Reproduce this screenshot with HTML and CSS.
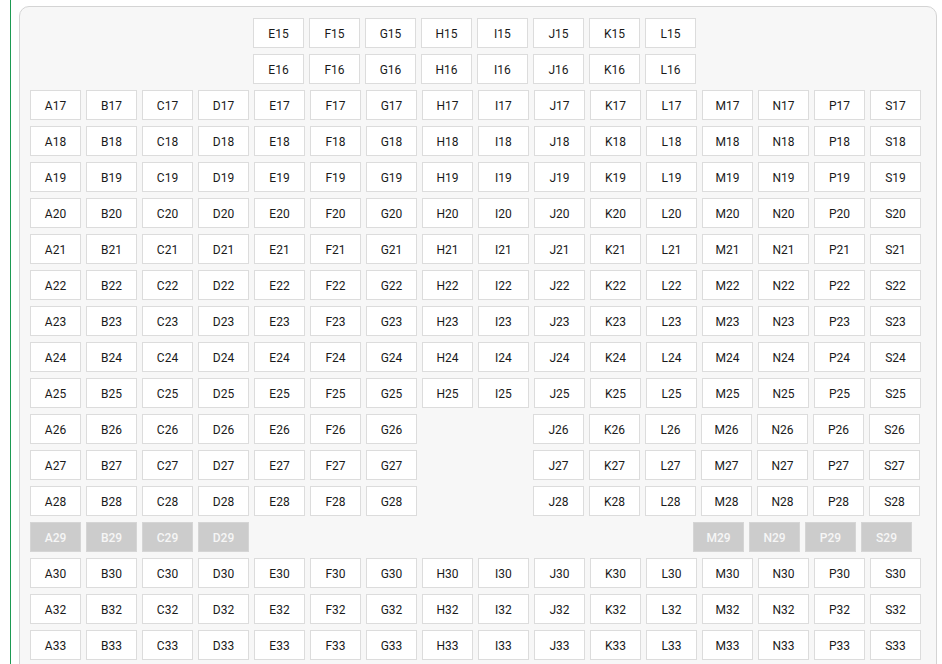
FILE: index.html
```html
<!DOCTYPE html>
<html>
<head>
<meta charset="utf-8">
<link rel="stylesheet" href="styles.css">
</head>
<body>
<div class="frame">
<div class="panel">
<div class="rows">
<div class="row"><span class="sp sp-top"></span><span class="seat">E15</span><span class="seat">F15</span><span class="seat">G15</span><span class="seat">H15</span><span class="seat">I15</span><span class="seat">J15</span><span class="seat">K15</span><span class="seat">L15</span></div>
<div class="row"><span class="sp sp-top"></span><span class="seat">E16</span><span class="seat">F16</span><span class="seat">G16</span><span class="seat">H16</span><span class="seat">I16</span><span class="seat">J16</span><span class="seat">K16</span><span class="seat">L16</span></div>
<div class="row"><span class="seat">A17</span><span class="seat">B17</span><span class="seat">C17</span><span class="seat">D17</span><span class="seat">E17</span><span class="seat">F17</span><span class="seat">G17</span><span class="seat">H17</span><span class="seat">I17</span><span class="seat">J17</span><span class="seat">K17</span><span class="seat">L17</span><span class="seat">M17</span><span class="seat">N17</span><span class="seat">P17</span><span class="seat">S17</span></div>
<div class="row"><span class="seat">A18</span><span class="seat">B18</span><span class="seat">C18</span><span class="seat">D18</span><span class="seat">E18</span><span class="seat">F18</span><span class="seat">G18</span><span class="seat">H18</span><span class="seat">I18</span><span class="seat">J18</span><span class="seat">K18</span><span class="seat">L18</span><span class="seat">M18</span><span class="seat">N18</span><span class="seat">P18</span><span class="seat">S18</span></div>
<div class="row"><span class="seat">A19</span><span class="seat">B19</span><span class="seat">C19</span><span class="seat">D19</span><span class="seat">E19</span><span class="seat">F19</span><span class="seat">G19</span><span class="seat">H19</span><span class="seat">I19</span><span class="seat">J19</span><span class="seat">K19</span><span class="seat">L19</span><span class="seat">M19</span><span class="seat">N19</span><span class="seat">P19</span><span class="seat">S19</span></div>
<div class="row"><span class="seat">A20</span><span class="seat">B20</span><span class="seat">C20</span><span class="seat">D20</span><span class="seat">E20</span><span class="seat">F20</span><span class="seat">G20</span><span class="seat">H20</span><span class="seat">I20</span><span class="seat">J20</span><span class="seat">K20</span><span class="seat">L20</span><span class="seat">M20</span><span class="seat">N20</span><span class="seat">P20</span><span class="seat">S20</span></div>
<div class="row"><span class="seat">A21</span><span class="seat">B21</span><span class="seat">C21</span><span class="seat">D21</span><span class="seat">E21</span><span class="seat">F21</span><span class="seat">G21</span><span class="seat">H21</span><span class="seat">I21</span><span class="seat">J21</span><span class="seat">K21</span><span class="seat">L21</span><span class="seat">M21</span><span class="seat">N21</span><span class="seat">P21</span><span class="seat">S21</span></div>
<div class="row"><span class="seat">A22</span><span class="seat">B22</span><span class="seat">C22</span><span class="seat">D22</span><span class="seat">E22</span><span class="seat">F22</span><span class="seat">G22</span><span class="seat">H22</span><span class="seat">I22</span><span class="seat">J22</span><span class="seat">K22</span><span class="seat">L22</span><span class="seat">M22</span><span class="seat">N22</span><span class="seat">P22</span><span class="seat">S22</span></div>
<div class="row"><span class="seat">A23</span><span class="seat">B23</span><span class="seat">C23</span><span class="seat">D23</span><span class="seat">E23</span><span class="seat">F23</span><span class="seat">G23</span><span class="seat">H23</span><span class="seat">I23</span><span class="seat">J23</span><span class="seat">K23</span><span class="seat">L23</span><span class="seat">M23</span><span class="seat">N23</span><span class="seat">P23</span><span class="seat">S23</span></div>
<div class="row"><span class="seat">A24</span><span class="seat">B24</span><span class="seat">C24</span><span class="seat">D24</span><span class="seat">E24</span><span class="seat">F24</span><span class="seat">G24</span><span class="seat">H24</span><span class="seat">I24</span><span class="seat">J24</span><span class="seat">K24</span><span class="seat">L24</span><span class="seat">M24</span><span class="seat">N24</span><span class="seat">P24</span><span class="seat">S24</span></div>
<div class="row"><span class="seat">A25</span><span class="seat">B25</span><span class="seat">C25</span><span class="seat">D25</span><span class="seat">E25</span><span class="seat">F25</span><span class="seat">G25</span><span class="seat">H25</span><span class="seat">I25</span><span class="seat">J25</span><span class="seat">K25</span><span class="seat">L25</span><span class="seat">M25</span><span class="seat">N25</span><span class="seat">P25</span><span class="seat">S25</span></div>
<div class="row"><span class="seat">A26</span><span class="seat">B26</span><span class="seat">C26</span><span class="seat">D26</span><span class="seat">E26</span><span class="seat">F26</span><span class="seat">G26</span><span class="sp sp-aisle"></span><span class="seat">J26</span><span class="seat">K26</span><span class="seat">L26</span><span class="seat">M26</span><span class="seat">N26</span><span class="seat">P26</span><span class="seat">S26</span></div>
<div class="row"><span class="seat">A27</span><span class="seat">B27</span><span class="seat">C27</span><span class="seat">D27</span><span class="seat">E27</span><span class="seat">F27</span><span class="seat">G27</span><span class="sp sp-aisle"></span><span class="seat">J27</span><span class="seat">K27</span><span class="seat">L27</span><span class="seat">M27</span><span class="seat">N27</span><span class="seat">P27</span><span class="seat">S27</span></div>
<div class="row"><span class="seat">A28</span><span class="seat">B28</span><span class="seat">C28</span><span class="seat">D28</span><span class="seat">E28</span><span class="seat">F28</span><span class="seat">G28</span><span class="sp sp-aisle"></span><span class="seat">J28</span><span class="seat">K28</span><span class="seat">L28</span><span class="seat">M28</span><span class="seat">N28</span><span class="seat">P28</span><span class="seat">S28</span></div>
<div class="row"><span class="seat off">A29</span><span class="seat off">B29</span><span class="seat off">C29</span><span class="seat off">D29</span><span class="sp sp-wide"></span><span class="seat off">M29</span><span class="seat off">N29</span><span class="seat off">P29</span><span class="seat off">S29</span></div>
<div class="row"><span class="seat">A30</span><span class="seat">B30</span><span class="seat">C30</span><span class="seat">D30</span><span class="seat">E30</span><span class="seat">F30</span><span class="seat">G30</span><span class="seat">H30</span><span class="seat">I30</span><span class="seat">J30</span><span class="seat">K30</span><span class="seat">L30</span><span class="seat">M30</span><span class="seat">N30</span><span class="seat">P30</span><span class="seat">S30</span></div>
<div class="row"><span class="seat">A32</span><span class="seat">B32</span><span class="seat">C32</span><span class="seat">D32</span><span class="seat">E32</span><span class="seat">F32</span><span class="seat">G32</span><span class="seat">H32</span><span class="seat">I32</span><span class="seat">J32</span><span class="seat">K32</span><span class="seat">L32</span><span class="seat">M32</span><span class="seat">N32</span><span class="seat">P32</span><span class="seat">S32</span></div>
<div class="row"><span class="seat">A33</span><span class="seat">B33</span><span class="seat">C33</span><span class="seat">D33</span><span class="seat">E33</span><span class="seat">F33</span><span class="seat">G33</span><span class="seat">H33</span><span class="seat">I33</span><span class="seat">J33</span><span class="seat">K33</span><span class="seat">L33</span><span class="seat">M33</span><span class="seat">N33</span><span class="seat">P33</span><span class="seat">S33</span></div>
</div>
</div>
</div>
</body>
</html>
```
FILE: styles.css
```css
html, body {
  margin: 0;
  padding: 0;
  background: #ffffff;
  overflow: hidden;
}
body {
  font-family: Roboto, "Liberation Sans", Arial, sans-serif;
}
.frame {
  margin-left: 10px;
  border-left: 1px solid #1d9a52;
  padding: 6px 0 0 8px;
  height: 664px;
  box-sizing: border-box;
  overflow: hidden;
}
.panel {
  width: 918px;
  box-sizing: border-box;
  border: 1px solid #d4d4d4;
  border-radius: 10px 10px 0 0;
  background: #f7f7f7;
  padding: 11px 10px 20px 10px;
}
.rows {
  display: flex;
  flex-direction: column;
  gap: 6px;
}
.row {
  display: flex;
  gap: 5px;
  height: 30px;
}
.seat {
  width: 51px;
  height: 30px;
  box-sizing: border-box;
  border: 1px solid #dcdcdc;
  background: #ffffff;
  color: #1a1a1a;
  font-size: 12px;
  padding-top: 2px;
  display: flex;
  align-items: center;
  justify-content: center;
  flex: none;
}
.seat.off {
  background: #cccccc;
  border-color: #d5d5d5;
  color: #f6f6f6;
  font-weight: 500;
}
.sp { flex: none; height: 30px; }
.sp-top { width: 218px; }
.sp-aisle { width: 106px; }
.sp-wide { width: 434px; }
```
